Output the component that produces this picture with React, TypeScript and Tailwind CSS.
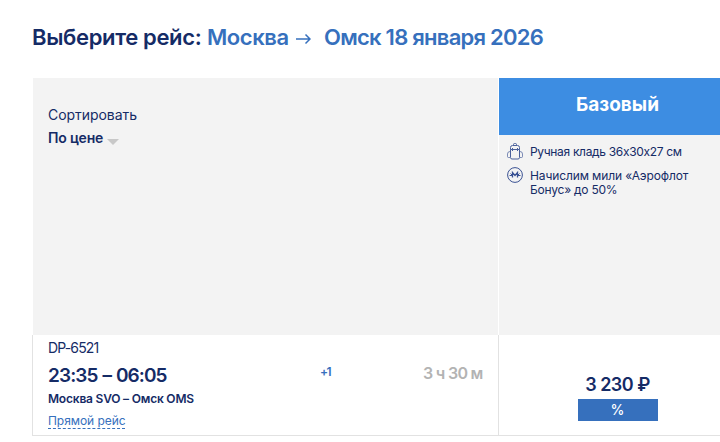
import React from 'react';

const BackpackIcon: React.FC = () => (
  <svg className="shrink-0" width="16" height="17" viewBox="0 0 16 17" fill="none" stroke="#4a609b" strokeWidth="1">
    <path d="M6.500 2.500V1.500q0-1 1-1h1q1 0 1 1v1" />
    <path d="M3.500 6.500V4.500q0-2 2-2h5q2 0 2 2v2z" />
    <path d="M5.500 5v3M10.500 5v3" />
    <path d="M3.500 6.500v8q0 1.500 1.500 1.500h6q1.500 0 1.500-1.500v-8" />
    <path strokeOpacity="0.7" d="M3 8.500Q.500 8.500.500 11v2.500q0 1 1 1H3M13 8.500q2.500 0 2.500 2.500v2.500q0 1-1 1H13" />
  </svg>
);

const MilesIcon: React.FC = () => (
  <svg className="shrink-0" width="16" height="16" viewBox="0 0 16 16" fill="none" stroke="#3a5293" strokeWidth="1">
    <circle cx="8" cy="8" r="7.4" />
    <path strokeWidth="1.3" d="M5.500 10.500V5.500L8 8.500l2.500-3v5" />
    <path d="M2.500 8.500h3l-2-2M13.500 8.500h-3l2-2" />
  </svg>
);

const Heading: React.FC = () => (
  <h1 className="flex h-[78px] items-start pl-8 pt-[21px] text-[22px] leading-8 font-semibold whitespace-nowrap">
    <span className="w-[175px] tracking-[-0.35px]">Выберите рейс:</span>
    <span className="w-[89px] tracking-[-0.45px] text-[#3670bd]">Москва</span>
    <svg className="mt-3 mr-[13px] shrink-0" width="15" height="12" viewBox="0 0 15 12" fill="none" stroke="#3670bd" strokeWidth="1.5">
      <path d="M0 6h14M9.500 1.500 14 6l-4.500 4.500" />
    </svg>
    <span className="tracking-[-0.75px] text-[#3670bd]">Омск 18 января 2026</span>
  </h1>
);

const SortPanel: React.FC = () => (
  <div className="h-[257px] w-[465px] shrink-0 bg-[#f3f3f3] pl-[15px] pt-[27px]">
    <div className="text-[14px] leading-5 tracking-[-0.05px]">Сортировать</div>
    <div className="mt-[3px] flex text-[14px] leading-5 font-semibold">
      <span className="w-[59px] tracking-[-0.2px] whitespace-nowrap">По цене</span>
      <span className="mt-[11px] h-0 w-0 border-x-[6px] border-t-[6px] border-x-transparent border-t-[#c8c8c8]" />
    </div>
  </div>
);

const TariffPanel: React.FC = () => (
  <div className="ml-px h-[257px] flex-1 bg-[#f3f3f3]">
    <div className="flex h-[57px] items-center justify-center bg-[#3d8de2] pb-0.5 pl-4 text-[19px] font-bold text-white">
      <span>Базовый</span>
    </div>
    <ul className="pl-2 pt-2 text-[12px] leading-[14px] whitespace-nowrap">
      <li className="flex gap-[7px]">
        <BackpackIcon />
        <span className="pt-0.5 tracking-[-0.32px]">Ручная кладь 36х30х27 см</span>
      </li>
      <li className="mt-[7px] flex gap-[7px]">
        <MilesIcon />
        <span className="pt-0.5 tracking-[-0.12px]">
          Начислим мили «Аэрофлот
          <br />
          <span className="tracking-[-0.25px]">Бонус» до 50%</span>
        </span>
      </li>
    </ul>
  </div>
);

const FlightRow: React.FC = () => (
  <div className="ml-8 flex h-[101px] border-b border-l border-[#e2e2e2]">
    <div className="flex w-[466px] shrink-0 border-r border-[#e2e2e2] pl-[15px] whitespace-nowrap">
      <div className="w-[272px] pt-1">
        <div className="text-[14px] leading-[18px] tracking-[-0.85px]">DP-6521</div>
        <div className="mt-[5px] text-[19px] leading-7 font-semibold tracking-[-0.9px] [word-spacing:1px]">23:35 – 06:05</div>
        <div className="mt-px text-[12px] leading-4 font-semibold tracking-[-0.2px]">Москва SVO – Омск OMS</div>
        <div className="mt-1.5 h-4 w-[77px] border-b border-dashed border-[#3670bd] text-[12px] leading-4 tracking-[-0.05px] text-[#3670bd]">
          Прямой рейс
        </div>
      </div>
      <span className="w-[103px] pt-[29px] text-[12px] leading-4 font-semibold tracking-[-1.5px] text-[#3670bd]">+1</span>
      <span className="pt-[26px] text-[16px] leading-6 font-semibold tracking-[-0.7px] text-[#b3b3b3]">3 ч 30 м</span>
    </div>
    <div className="flex flex-1 flex-col items-center pl-4 pt-[37px]">
      <div className="text-[18px] leading-[26px] font-semibold tracking-[-0.5px] whitespace-nowrap">3 230 ₽</div>
      <div className="mt-px h-[22px] w-20 bg-[#3670bd] text-center text-[14px] leading-[21px] font-medium text-white">%</div>
    </div>
  </div>
);

const App: React.FC = () => {
  return (
    <div className="h-[442px] w-[720px] overflow-hidden bg-white font-['Inter','Liberation_Sans',sans-serif] text-[#152b66]">
      <Heading />
      <div className="ml-[33px] flex">
        <SortPanel />
        <TariffPanel />
      </div>
      <FlightRow />
    </div>
  );
};

export default App;
